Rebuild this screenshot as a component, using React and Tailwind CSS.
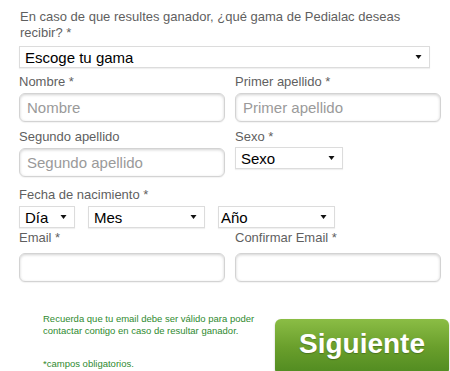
import React from "react";

const font = { fontFamily: '"Liberation Sans", Arial, sans-serif' };

function Arrow() {
  return (
    <svg width="7" height="4" viewBox="0 0 7 4" className="shrink-0">
      <path d="M0.5 0 H6.5 L3.5 4 Z" fill="#111" />
    </svg>
  );
}

function FakeSelect({ label, className = "" }) {
  return (
    <div
      className={`flex items-center justify-between h-[22px] bg-white border border-[#dcdcdc] shadow-[0_1px_1px_rgba(0,0,0,0.06)] pl-[5px] pr-[7px] text-[15px] leading-none text-black ${className}`}
    >
      <span>{label}</span>
      <Arrow />
    </div>
  );
}

function TextInput({ placeholder = "", className = "" }) {
  return (
    <input
      placeholder={placeholder}
      className={`h-[29px] w-[206px] rounded-[6px] border border-[#d3d3d3] bg-white px-[7px] text-[15px] text-[#333] placeholder:text-[#9a9a9a] shadow-[inset_0_1px_3px_rgba(0,0,0,0.18),0_1px_1px_rgba(0,0,0,0.05)] outline-none ${className}`}
      style={font}
    />
  );
}

function Label({ children }) {
  return <div className="text-[13px] leading-[16px] text-[#5f5f5f]">{children}</div>;
}

export default function App() {
  return (
    <div className="w-[450px] h-[371px] overflow-hidden bg-white pl-[19px] pt-[9px]" style={font}>
      <p className="w-[400px] pl-[1px] text-[13px] leading-[16px] text-[#5f5f5f]">
        En caso de que resultes ganador, ¿qué gama de Pedialac deseas recibir? *
      </p>
      <FakeSelect label="Escoge tu gama" className="mt-[5px] w-[411px]" />

      <div className="mt-[6px] grid grid-cols-[206px_206px] gap-x-[10px]">
        <div>
          <Label>Nombre *</Label>
          <TextInput placeholder="Nombre" className="mt-[3px]" />
        </div>
        <div>
          <Label>Primer apellido *</Label>
          <TextInput placeholder="Primer apellido" className="mt-[3px]" />
        </div>
      </div>

      <div className="mt-[7px] grid grid-cols-[206px_206px] gap-x-[10px]">
        <div>
          <Label>Segundo apellido</Label>
          <TextInput placeholder="Segundo apellido" className="mt-[3px]" />
        </div>
        <div>
          <Label>Sexo *</Label>
          <FakeSelect label="Sexo" className="mt-[2px] w-[108px]" />
        </div>
      </div>

      <div className="mt-[10px]">
        <Label>Fecha de nacimiento *</Label>
        <div className="mt-[3px] flex gap-[13px]">
          <FakeSelect label="Día" className="w-[56px]" />
          <FakeSelect label="Mes" className="w-[117px]" />
          <FakeSelect label="Año" className="w-[117px] !pl-[2px]" />
        </div>
      </div>

      <div className="mt-[2px] grid grid-cols-[206px_206px] gap-x-[10px]">
        <div>
          <Label>Email *</Label>
          <TextInput className="mt-[7px] w-[205px]" />
        </div>
        <div>
          <Label>Confirmar Email *</Label>
          <TextInput className="mt-[7px] w-[205px]" />
        </div>
      </div>

      <div className="mt-[30px] flex">
        <div className="pl-[24px] pt-[1px] w-[256px]">
          <p className="text-[9.5px] leading-[12px] text-[#2f8a2f]">
            Recuerda que tu email debe ser válido para poder
            <br />
            contactar contigo en caso de resultar ganador.
          </p>
          <p className="mt-[21px] text-[9.5px] leading-[12px] text-[#2f8a2f]">*campos obligatorios.</p>
        </div>
        <button
          className="mt-[7px] h-[56px] w-[174px] rounded-[6px] bg-gradient-to-b from-[#8bbd45] via-[#6a9f2c] to-[#4f8a20] text-[28px] font-bold text-white shadow-[0_1px_2px_rgba(0,0,0,0.25)] [text-shadow:0_1px_1px_rgba(0,0,0,0.25)] pb-[6px]"
          style={font}
        >
          Siguiente
        </button>
      </div>
    </div>
  );
}
